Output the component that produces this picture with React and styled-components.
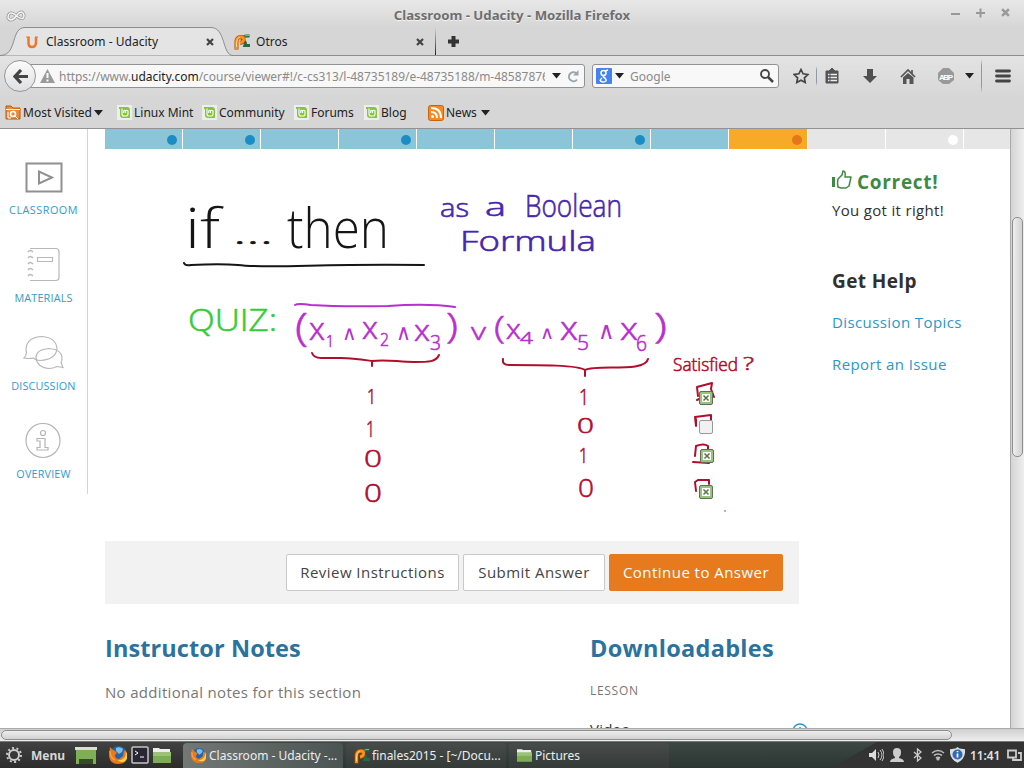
import React from "react";
import styled, { createGlobalStyle } from "styled-components";

const Global = createGlobalStyle`
  * { box-sizing: border-box; }
  body { margin: 0; width: 1024px; height: 768px; overflow: hidden; background: #fff; }
  svg { display: block; flex: none; }
  button { font: inherit; margin: 0; }
  h2, p { margin: 0; }
`;
const Screen = styled.div`
  width: 1024px; height: 768px; display: flex; flex-direction: column; overflow: hidden;
  font: 12px "Noto Sans", sans-serif; color: #222; background: #d6d6d6;
`;
const TitleBar = styled.header`
  height: 27px; flex: none; display: grid; grid-template-columns: 80px 1fr 80px; align-items: center;
  padding: 2px 14px 0 5px; background: linear-gradient(#e8e8e8, #d6d6d6);
`;
const Title = styled.div`
  text-align: center; font-weight: 700; font-size: 13.2px; color: #6e6e6e; white-space: nowrap;
  text-shadow: 0 1px #f4f4f4; padding-left: 9px;
`;
const WindowButtons = styled.div`display: flex; justify-content: flex-end; gap: 15px; margin-top: -3px;`;
const Tabs = styled.div`height: 29px; flex: none; display: flex; background: #d6d6d6; border-bottom: 1px solid #8d8d8d;`;
const ActiveTab = styled.div`
  width: 233px; height: 29px; display: grid; align-items: center;
  > * { grid-area: 1 / 1; }
`;
const TabBody = styled.div`
  display: flex; align-items: center; height: 29px; padding-left: ${(p) => p.$left}px; width: ${(p) => p.$width}px;
  line-height: 16px; letter-spacing: 0.02px;
  svg:last-child { margin-left: auto; }
`;
const TabLabel = styled.span`margin-left: ${(p) => p.$gap || 6}px; white-space: nowrap;`;
const TabRule = styled.i`width: 1px; height: 28px; margin: 0 11px 0 11px; background: linear-gradient(transparent, #222);`;
const NavBar = styled.div`
  height: 40px; flex: none; display: flex; align-items: center; padding: 0 12px 0 4px; background: linear-gradient(#e3e3e3, #d7d7d7);
`;
const BackButton = styled.div`
  width: 32px; height: 32px; border-radius: 50%; border: 1px solid #8f989f; background: linear-gradient(#fbfbfb, #dfdfdf);
  display: grid; place-items: center; flex: none; z-index: 1;
`;
const Field = styled.div`
  height: 24px; width: ${(p) => p.$width}px; margin-left: ${(p) => p.$left}px; flex: none; display: flex; align-items: center;
  border: 1px solid #929292; border-radius: ${(p) => (p.$joined ? "0 3px 3px 0" : "3px")}; background: #f8f8f8; color: #8a8a8a;
  padding: 0 4px 0 ${(p) => p.$pad}px;
`;
const Address = styled.div`
  width: 489px; overflow: hidden; white-space: nowrap; margin: 0 7px 0 4px; letter-spacing: -0.025px;
  b { font-weight: 400; color: #1c1c1c; }
`;
const SearchText = styled.span`flex: 1; margin-left: 6px;`;
const Tools = styled.div`flex: 1; height: 40px; display: flex; align-items: center; padding-left: 14px;`;
const ToolRule = styled.i`flex: none; width: 1px; height: ${(p) => p.$h}px; background: linear-gradient(transparent, #8e9aa8 20%, #8e9aa8 80%, transparent); margin: 0 ${(p) => p.$r}px 0 ${(p) => p.$l}px;`;
const Spacer = styled.i`width: ${(p) => p.$w}px; flex: none;`;
const Bookmarks = styled.div`
  height: 33px; flex: none; display: flex; align-items: center; padding: 1px 5px 0; background: #d6d6d6; border-bottom: 1px solid #929292;
`;
const Bookmark = styled.div`display: flex; align-items: center; gap: 2px; width: ${(p) => p.$w}px; white-space: nowrap; flex: none; line-height: 16px;`;
const Viewport = styled.div`height: 599px; flex: none; display: flex; background: #fff; overflow: hidden;`;
const Sidebar = styled.nav`width: 88px; height: 365px; flex: none; border-right: 1px solid #d4d4d4; padding-top: 30px;`;
const SideItem = styled.div`
  height: 88px; display: flex; flex-direction: column; align-items: center; color: #2f9bd0;
  font: 10.8px/16px "Open Sans", sans-serif; letter-spacing: ${(p) => p.$ls}px;
  svg { margin-bottom: 6px; }
`;
const Page = styled.main`width: 905px; margin-left: 17px; flex: none; font-family: "Open Sans", sans-serif; overflow: hidden;`;
const Progress = styled.div`height: 20px; display: flex; gap: 1px;`;
const Segment = styled.div`
  width: ${(p) => (p.$state === "now" ? 78 : 77)}px; height: 20px; flex: none; display: flex; align-items: center; justify-content: flex-end; padding-right: 5px;
  padding-top: 1px; background: ${(p) => ({ done: "#8cc5d8", now: "#f7a928", next: "#e6e6e6" })[p.$state]};
`;
const Dot = styled.i`width: 10px; height: 10px; border-radius: 50%; background: ${(p) => ({ done: "#1c8cc5", now: "#e5761b", next: "#fff" })[p.$state]};`;
const Columns = styled.div`display: flex; height: 455px;`;
const Lesson = styled.section`width: 694px; flex: none;`;
const Board = styled.div`position: relative; height: 392px;`;
const Ink = styled.text`
  font-family: ${(p) => (p.$symbol ? '"DejaVu Sans"' : '"Open Sans"')}, sans-serif; font-weight: 300; font-size: ${(p) => p.$size}px;
  fill: ${(p) => p.$color}; stroke: ${(p) => p.$color}; stroke-width: ${(p) => (p.$symbol || p.$size > 50 ? 0 : 0.6)};
`;
const Check = styled.div`
  position: absolute; left: ${(p) => p.$x}px; top: ${(p) => p.$y}px; width: 14px; height: 14px; border-radius: 2px;
  border: 1px solid ${(p) => (p.$on ? "#5e6d5c" : "#999")}; background: ${(p) => (p.$on ? "#9cc37c" : "#f1f1f1")};
  display: grid; place-items: center;
`;
const Actions = styled.div`height: 63px; display: flex; align-items: center; justify-content: flex-end; gap: 4px; padding: 0 16px 0 0; background: #f2f2f2;`;
const Action = styled.button`
  width: ${(p) => p.$w}px; height: 37px; padding: 0 0 2px; border-radius: 2px; font-size: 15px; white-space: nowrap; letter-spacing: 0.46px;
  border: 1px solid ${(p) => (p.$primary ? "#e67a1c" : "#c9c9c9")};
  background: ${(p) => (p.$primary ? "#e67a1c" : "#fff")}; color: ${(p) => (p.$primary ? "#fff" : "#444")};
`;
const Aside = styled.aside`padding: 20px 0 0 33px; font-size: 15px; color: #303030;`;
const Verdict = styled.h2`display: flex; gap: 5px; font-size: 19px; line-height: 26px; font-weight: 700; color: #3f8a43; height: 27px; letter-spacing: 0.7px;`;
const AsideText = styled.p`line-height: 28px; height: 28px; letter-spacing: 0.32px;`;
const AsideTitle = styled.h2`margin-top: 42px; height: 28px; line-height: 30px; font-size: 19px; font-weight: 700; letter-spacing: 0.4px;`;
const AsideLink = styled.p`margin-top: 14px; line-height: 28px; color: #2a97cd; letter-spacing: 0.4px;`;
const Notes = styled.div`display: grid; grid-template-columns: 485px 1fr; padding-top: 27px;`;
const NotesTitle = styled.h2`font-size: 23.5px; line-height: 34px; font-weight: 700; color: #2a739e; white-space: nowrap; letter-spacing: ${(p) => p.$ls || 0}px;`;
const NoteText = styled.p`margin-top: 15px; font-size: 15px; line-height: 24px; color: #777; letter-spacing: 0.32px;`;
const Label = styled.p`margin-top: 16px; font-size: 12px; line-height: 20px; color: #777; letter-spacing: 0.7px;`;
const FileRow = styled.div`
  display: flex; justify-content: space-between; width: 218px; margin-top: 17px; font-size: 15px; line-height: 22px; color: #333; letter-spacing: 0.2px;
  svg { margin-top: 5px; }
`;
const VScroll = styled.div`width: 14px; flex: none; border-left: 1px solid #aaa; background: linear-gradient(90deg, #d4d4d4, #eee); padding: 88px 1px 0 1px;`;
const Thumb = styled.div`
  border: 1px solid #8e8e8e; border-radius: 5px; height: ${(p) => p.$h}px; width: ${(p) => p.$w}px;
  background: linear-gradient(${(p) => (p.$h > 20 ? "90deg, " : "")}#eee, #d2d2d2);
`;
const HScroll = styled.div`
  height: 14px; flex: none; padding: 1px 1px; background: linear-gradient(#d0d0d0, #eee); border-top: 1px solid #aaa; border-bottom: 1px solid #777;
`;
const Taskbar = styled.footer`
  height: 26px; flex: none; display: flex; align-items: center; color: #eee;
  background: linear-gradient(150deg, transparent 0 82%, #333 82%), linear-gradient(#3d4744, #2b3532);
`;
const Launcher = styled.div`width: 183px; height: 26px; display: flex; align-items: center; padding-left: 5px; background: linear-gradient(#414141, #2c2c2c); flex: none;`;
const MenuLabel = styled.b`width: 37px; margin: 0 7px 0 8px; color: #d8d8d8; font-size: 12px;`;
const Task = styled.div`
  width: 160px; height: 25px; margin: 1px 3px 0 0; flex: none; display: flex; align-items: center; gap: ${(p) => p.$gap ?? 3}px; padding-left: 8px; border-radius: 4px 4px 0 0;
  background: ${(p) => (p.$on ? "linear-gradient(90deg, #737876, #4a5452)" : "linear-gradient(#474c4a, #343a38)")}; white-space: nowrap;
`;
const Tray = styled.div`margin-left: auto; display: flex; align-items: center; height: 26px; padding-right: 2px;`;
const Clock = styled.span`font-weight: 600; color: #e4e4e4; width: 31px; font-size: 11.8px; white-space: nowrap;`;

const Cross = ({ s = 8, c = "#444", w = 2.2 }) => (
  <svg width={s} height={s} viewBox="0 0 8 8"><path d="M1 1l6 6M7 1L1 7" stroke={c} strokeWidth={w} /></svg>
);
const Caret = () => <svg width="9" height="6"><path d="M0 0h9L4.500 5.500z" fill="#222" /></svg>;
const Mint = () => (
  <svg width="15" height="15"><rect width="15" height="15" fill="#eee" /><path d="M2 2h8q3 0 3 3v8H6q-3 0-3-3V4H2z" fill="#86c440" />
    <path d="M5 3.500v5.500q0 2 2 2h2.500q1.500 0 1.500-2V6q-1.500-1.500-2.500 0V8M8.500 6Q7 4.500 6.700 6.500V8" fill="none" stroke="#fff" strokeWidth="1.100" /></svg>
);
const Folder = ({ w = 18, h = 15 }) => (
  <svg width={w} height={h} viewBox="0 0 18 15"><path d="M0 0h6l1 1h10v4H0z" fill="#eee" /><path d="M0 4h18v11H0z" fill="#7eac57" /><path d="M0 4h18v4H0z" fill="#9bc276" /></svg>
);
const Fox = ({ s = 18 }) => (
  <svg width={s} height={s} viewBox="0 0 18 18"><circle cx="9.500" cy="8" r="8" fill="#2664a8" /><path d="M7 2q4-2 7 1l-1 3-3 2-3-3z" fill="#78c0e8" />
    <path d="M1 1l3 3 2 1 2 2-2 2q0 4 4 4l4-3 1-6q3 3 3 7 0 7-9 7Q1 18 0 10z" fill="#e9791b" /><path d="M16 4q2 5-1 8-3 3-7 2 6 4 9 0 3-5-1-10z" fill="#ffd34e" /><path d="M1 5q0 7 5 9" fill="none" stroke="#ffa338" strokeWidth="1.500" /></svg>
);
const PyIcon = () => (
  <svg width="17" height="16" viewBox="0 0 17 16">
    <path d="M15.500 2H13Q9 2 8 4.500q0 2 2 3t1 4h5" fill="none" stroke="#1f6e42" strokeWidth="3.200" /><path d="M15 1.500h-2q-3 0-4 2" fill="none" stroke="#7ac190" strokeWidth="1" />
    <path d="M2.500 15.500V9Q2 3 7 3q3 0 2.500 3Q9 8.500 6 9" fill="none" stroke="#b8440c" strokeWidth="4" />
    <path d="M2.500 15V9Q2 3 7 3q3 0 2.500 3Q9 8.500 6 9" fill="none" stroke="#f7941d" strokeWidth="2.800" />
    <path d="M2.500 13V9Q2.500 4 6 3" fill="none" stroke="#ffd866" strokeWidth="1" />
  </svg>
);

const sideItems = [
  ["CLASSROOM", 0.5, <svg width="38" height="37"><path d="M1.500 4.500h35v28h-35z" fill="none" stroke="#909090" strokeWidth="2" /><path d="M14 12.500v12l13-6z" fill="none" stroke="#909090" strokeWidth="2" /></svg>],
  ["MATERIALS", 0.18, <svg width="38" height="37" fill="none" stroke="#b9b9b9" strokeWidth="1.200"><path d="M5 1.500h26q3 0 3 3v26q0 3-3 3H5M12.500 10.500h15v4h-15z" /><path d="M3 5q2-3 5 0M3 11q2-3 5 0M3 17q2-3 5 0M3 23q2-3 5 0M3 29q2-3 5 0" strokeWidth="1.500" /></svg>],
  ["DISCUSSION", 0.15, <svg width="42" height="37" fill="none" stroke="#b9b9b9" strokeWidth="1.200"><path d="M3 14Q4 2 19 1.500q14 1 15 12-1 11-17 12-4 0-7-2.500-3 1-9 0 2-2 2.500-5z" /><path d="M13 22.500q0-8 13-9 13 1 13 10 0 3-1 4l2 5-6-1q-4 2-8 2-12-1-13-11z" /></svg>],
  ["OVERVIEW", 0.18, <svg width="38" height="37" fill="none" stroke="#b5b5b5" strokeWidth="1.200"><circle cx="18" cy="17.500" r="17" /><circle cx="18" cy="10" r="2.500" /><path d="M12 15.500h8v9h3v2.500H12v-2.500h3V18h-3z" /></svg>],
];
const segments = [["done", 1], ["done", 1], ["done"], ["done", 1], ["done"], ["done"], ["done", 1], ["done"], ["now", 1], ["next"], ["next", 1], ["next"]];
const ink = { black: "#151515", blue: "#4527ae", green: "#35cd35", pink: "#b92ed0", red: "#b20d2d" };
/* text, x, baseline, size, drawn width, ink */
const writing = [
  ["if", 185, 248, 56, 35, "black"], ["...", 233, 244, 30, 40, "black"], ["then", 287, 248, 56, 102, "black"],
  ["as", 440, 217, 25, 29, "blue"], ["a", 485, 216, 25, 21, "blue"], ["Boolean", 525, 217, 31, 97, "blue"], ["Formula", 460, 251, 27, 136, "blue"],
  ["QUIZ:", 188, 331, 31, 89, "green"],
  ["(", 295, 341, 38, 13, "pink"], ["x", 309, 340, 31, 16, "pink"], ["1", 326, 347, 17, 8, "pink"], ["∧", 342, 340, 20, 15, "pink"],
  ["x", 362, 339, 31, 16, "pink"], ["2", 380, 346, 19, 9, "pink"], ["∧", 396, 340, 22, 15, "pink"], ["x", 414, 341, 29, 16, "pink"], ["3", 430, 350, 21, 11, "pink"], [")", 446, 338, 34, 12, "pink"],
  ["v", 471, 340, 24, 15, "pink"], ["(", 494, 338, 32, 11, "pink"], ["x", 506, 339, 28, 15, "pink"], ["4", 520, 344, 17, 13, "pink"], ["∧", 540, 339, 18, 14, "pink"],
  ["x", 560, 340, 33, 18, "pink"], ["5", 577, 350, 20, 12, "pink"], ["∧", 598, 339, 24, 17, "pink"], ["x", 620, 340, 32, 18, "pink"], ["6", 636, 351, 22, 11, "pink"], [")", 654, 338, 34, 13, "pink"],
  ["Satisfied", 673, 371, 19, 65, "red"], ["?", 743, 370, 19, 11, "red"],
  ["1", 367, 404, 20, 9, "red"], ["1", 366, 437, 22, 9, "red"], ["0", 364, 467, 24, 18, "red"], ["0", 364, 502, 25, 18, "red"],
  ["1", 579, 405, 22, 10, "red"], ["0", 577, 433, 20, 17, "red"], ["1", 579, 463, 20, 9, "red"], ["0", 578, 497, 26, 16, "red"],
];

const Whiteboard = () => (
  <svg width="694" height="392" viewBox="105 149 694 392" fill="none" strokeWidth="2" strokeLinecap="round" strokeLinejoin="round">
    {writing.map(([t, x, y, s, w, c], i) => (
      <Ink key={i} x={x} y={y} textLength={w} lengthAdjust="spacingAndGlyphs" $symbol={t === "∧"} $size={s} $color={ink[c]}>{t}</Ink>
    ))}
    <path d="M184 263q1 3 7 2c20-1 35-1 47 0 30 4 90-2 186 0" stroke={ink.black} />
    <path d="M295 305q3-2 16 0 30 2 77 1 40-3 67 1" stroke={ink.pink} />
    <g stroke={ink.red}>
      <path d="M312 353q2 5 9 5l20 0c12 0 24 2 31 3v5m0-5c15-2 26 1 42 1 15 0 22 0 25-7" />
      <path d="M503 359q-1 6 6 6c31 0 69 0 76 5v6m0-6c12-6 60 3 63-11" />
      <path d="M697 400l2-1M698 396l-1-9 15-4-1 6 3 8M696 419v7l-1-9 16-2v5M695 456l1-10q8-3 12 0v4M693 462l16 1M696 491l-1-9 3-2h11v4" />
      <path d="M725 511h.1" strokeWidth="1.300" />
    </g>
  </svg>
);

export default function App() {
  return (
    <Screen>
      <Global />
      <TitleBar>
        <svg width="22" height="14" viewBox="0 -1 22 14" fill="none"><path d="M10 9q-5 4-7 0 0-7 6-4l4 3q6 4 6-2-2-6-7 0-4 6-8 4" stroke="#999" strokeWidth="3" /><path d="M10 9q-5 4-7 0 0-7 6-4l4 3q6 4 6-2-2-6-7 0-4 6-8 4" stroke="#f4f4f4" strokeWidth="1.500" /></svg>
        <Title>Classroom - Udacity - Mozilla Firefox</Title>
        <WindowButtons>
          <svg width="10" height="10"><path d="M0 6h9" stroke="#999" strokeWidth="2" /></svg>
          <svg width="10" height="10"><path d="M0 5h9M4.500 .5v9" stroke="#999" strokeWidth="2" /></svg>
          <Cross s={9} c="#999" />
        </WindowButtons>
      </TitleBar>
      <Tabs>
        <ActiveTab>
          <svg width="233" height="29"><path d="M0 28.500C18 28.500 10 .5 25 .5h186c15 0 11 28 22 28" fill="#e4e4e4" stroke="#8d8d8d" /></svg>
          <TabBody $left={25} $width={214}>
            <svg width="14" height="14" fill="none" stroke="#ed762c"><path d="M1 2h4M10 2h3" /><path d="M3.500 2v6q0 4 3.500 4t4-4V2" strokeWidth="2.500" /></svg>
            <TabLabel $gap={7}>Classroom - Udacity</TabLabel><Cross />
          </TabBody>
        </ActiveTab>
        <TabBody $left={1} $width={191}><PyIcon /><TabLabel $gap={5}>Otros</TabLabel><Cross /></TabBody>
        <TabRule />
        <TabBody $left={0} $width={12}><svg width="11" height="11"><path d="M5.500 0v11M0 5.500h11" stroke="#333" strokeWidth="4" /></svg></TabBody>
      </Tabs>
      <NavBar>
        <BackButton><svg width="15" height="15"><path d="M8 1L2 7.500l6 6.500M3 7.500h12" fill="none" stroke="#444" strokeWidth="3.200" /></svg></BackButton>
        <Field $width={555} $left={-6} $pad={9} $joined>
          <svg width="15" height="14"><path d="M7.500 0L15 14H0z" fill="#9a9a9a" /><path d="M7.500 4v5m0 1.500v2" stroke="#fff" strokeWidth="2" /></svg>
          <Address>https://www.<b>udacity.com</b>/course/viewer#!/c-cs313/l-48735189/e-48735188/m-48587876</Address>
          <Caret /><Spacer $w={6} />
          <svg width="13" height="13" fill="none"><path d="M10 9.500A4.500 4.500 0 1 1 9 3" stroke="#98a4ae" strokeWidth="2" /><path d="M11.500 0v5.500H6z" fill="#98a4ae" /></svg>
        </Field>
        <Field $width={187} $left={7} $pad={3}>
          <svg width="16" height="16"><rect width="16" height="16" rx="1" fill="#4385ee" /><g fill="none" stroke="#fff" strokeWidth="1.500"><circle cx="7.500" cy="5" r="2.500" /><path d="M9 3l3-1M8 7.500q-2 1 1 2.500 3 4-2 4-5-1-1-4" /></g></svg>
          <Spacer $w={3} /><Caret /><SearchText>Google</SearchText>
          <svg width="16" height="16" fill="none" stroke="#444"><circle cx="7" cy="6" r="4" strokeWidth="1.800" /><path d="M10 9l5 5" strokeWidth="2.500" /></svg>
        </Field>
        <Tools>
          <svg width="17" height="16"><path d="M8 1.500l2.100 4.300 4.700.7-3.400 3.300.8 4.700L8 12.300l-4.200 2.200.8-4.700L1.200 6.500l4.700-.7z" fill="none" stroke="#444" strokeWidth="1.700" /></svg>
          <ToolRule $h={20} $l={6} $r={7} />
          <svg width="16" height="16"><path d="M2 3h3l3-3 3 3h3v12H2z" fill="#555" stroke="#555" strokeWidth="1" /><path d="M4 6.500h1.500m1 0H13M4 9.500h1.500m1 0H13M4 12.500h1.500m1 0H13" stroke="#eee" strokeWidth="1.500" /></svg>
          <Spacer $w={23} /><svg width="15" height="15"><path d="M4 0h6v7h4L7 14 0 7h4z" fill="#505050" /></svg>
          <Spacer $w={22} /><svg width="17" height="15"><path d="M1 8l7-7 7 7M12 1v4" fill="none" stroke="#555" strokeWidth="1.700" /><path d="M3 8.500L8 4l5.500 4.500V15h-4v-5h-3v5H3z" fill="#555" /></svg>
          <Spacer $w={21} /><svg width="17" height="17"><path d="M5 0h6l5 5v7l-5 4H5l-5-4V5z" fill="#999" /><text x="8" y="11.500" textAnchor="middle" textLength="14" fontFamily="Liberation Sans" fontWeight="700" fontSize="8" fill="#fff">ABP</text></svg>
          <Spacer $w={10} /><Caret /><ToolRule $h={34} $l={7} $r={13} />
          <svg width="16" height="14"><path d="M1.500 2h13m-13 5h13m-13 5h13" stroke="#444" strokeWidth="2.800" strokeLinecap="round" /></svg>
        </Tools>
      </NavBar>
      <Bookmarks>
        <Bookmark $w={112}><svg width="16" height="15"><path d="M1 4V1h5l2 2h7v11H1z" fill="#e78d3c" stroke="#b45b15" /><path d="M1 4.500h14" stroke="#fff0db" /><circle cx="8" cy="9" r="2.500" fill="none" stroke="#fff" strokeWidth="1.500" /><path d="M10 11l3 3M3 7v6h3" stroke="#fff" fill="none" /></svg><span>Most Visited</span><Caret /></Bookmark>
        <Bookmark $w={85}><Mint />Linux Mint</Bookmark><Bookmark $w={92}><Mint />Community</Bookmark>
        <Bookmark $w={70}><Mint />Forums</Bookmark><Bookmark $w={64}><Mint />Blog</Bookmark>
        <Bookmark $w={70}><svg width="16" height="16"><rect x=".5" y=".5" width="15" height="15" rx="2" fill="#f58b20" stroke="#cb610e" /><path d="M3 3q10 0 10 10M3 7q6 0 6 6" fill="none" stroke="#fff" strokeWidth="2" /><circle cx="4.500" cy="11.500" r="1.500" fill="#fff" /></svg><span>News</span><Spacer $w={0} /><Caret /></Bookmark>
      </Bookmarks>
      <Viewport>
        <Sidebar>{sideItems.map(([name, ls, icon]) => <SideItem key={name} $ls={ls}>{icon}{name}</SideItem>)}</Sidebar>
        <Page>
          <Progress>{segments.map(([state, dot], i) => <Segment key={i} $state={state}>{dot && <Dot $state={state} />}</Segment>)}</Progress>
          <Columns>
            <Lesson>
              <Board><Whiteboard />
                {[[594, 242, 1], [594, 271, 0], [595, 300, 1], [594, 336, 1]].map(([x, y, on]) => <Check key={y} $x={x} $y={y} $on={on}>{on ? <svg width="8" height="8"><rect width="8" height="8" fill="#fff" /><path d="M1.500 1.500l5 5m0-5l-5 5" stroke="#56714d" strokeWidth="1.500" /></svg> : null}</Check>)}
              </Board>
              <Actions><Action $w={173}>Review Instructions</Action><Action $w={142}>Submit Answer</Action><Action $w={174} $primary>Continue to Answer</Action></Actions>
            </Lesson>
            <Aside>
              <Verdict><svg width="20" height="20" viewBox="0 -1 20 20"><path d="M0 7h3v10H0z" fill="#3f8a43" /><path d="M6 17q-1-4 0-8l4-4 1-4q3 0 2 6h6l-2 9-3 2H9z" fill="none" stroke="#3f8a43" strokeWidth="1.500" strokeLinejoin="round" /></svg>Correct!</Verdict>
              <AsideText>You got it right!</AsideText><AsideTitle>Get Help</AsideTitle><AsideLink>Discussion Topics</AsideLink><AsideLink>Report an Issue</AsideLink>
            </Aside>
          </Columns>
          <Notes>
            <div><NotesTitle $ls={0.1}>Instructor Notes</NotesTitle><NoteText>No additional notes for this section</NoteText></div>
            <div><NotesTitle $ls={0.3}>Downloadables</NotesTitle><Label>LESSON</Label><FileRow>Video<svg width="16" height="16" fill="none" stroke="#2a97cd" strokeWidth="1.500"><circle cx="8" cy="8" r="7" /><path d="M8 4v7M5 8l3 3 3-3" /></svg></FileRow></div>
          </Notes>
        </Page>
        <VScroll><Thumb $h={240} $w={11} /></VScroll>
      </Viewport>
      <HScroll><Thumb $h={10} $w={951} /></HScroll>
      <Taskbar>
        <Launcher>
          <svg width="18" height="18" fill="none" stroke="#ccc"><circle cx="9" cy="9" r="5" strokeWidth="2" /><circle cx="9" cy="9" r="7" strokeWidth="2" strokeDasharray="2 2.400" /></svg>
          <MenuLabel>Menu</MenuLabel>
          <svg width="22" height="17"><path d="M0 0h22v3H0z" fill="#ddd" /><path d="M1 3h20v14H1z" fill="#7eae55" /><path d="M4 12h14v5H4z" fill="#354c28" /></svg>
          <Spacer $w={12} /><Fox /><Spacer $w={4} />
          <svg width="18" height="18"><rect x="1" y="1" width="16" height="16" rx="1" fill="#292733" stroke="#c4c4c4" strokeWidth="1.500" /><path d="M4 5l3 2-3 2m5 2h4" stroke="#fff" fill="none" /></svg>
          <Spacer $w={4} /><Folder />
        </Launcher>
        <Task $on><Fox s={15} />Classroom - Udacity -...</Task><Task $gap={1}><PyIcon />finales2015 - [~/Docu...</Task><Task><Folder w={15} h={13} />Pictures</Task>
        <Tray>
          <svg width="15" height="14"><path d="M0 5h3l4-4v12L3 9H0z" fill="#ddd" /><path d="M9 4q2 3 0 6M11 2q4 5 0 10M13 1q4 6 0 12" fill="none" stroke="#ccc" /></svg>
          <Spacer $w={6} /><svg width="14" height="14"><path d="M3 4q0-4 4-4t4 4q0 4-2 5v1q5 1 5 4H0q0-3 5-4V9Q3 8 3 4z" fill="#ccc" /></svg>
          <Spacer $w={9} /><svg width="9" height="14"><path d="M1 4l7 6-3.500 3V1L8 4l-7 6" fill="none" stroke="#ccc" strokeWidth="1.300" /></svg>
          <Spacer $w={9} /><svg width="14" height="12" fill="none" stroke="#bbb" strokeWidth="1.600"><path d="M1 4q6-5 12 0M3 6.500q4-3 8 0M5 9q2-1.500 4 0" /><circle cx="7" cy="10" r=".8" /></svg>
          <Spacer $w={5} /><svg width="15" height="16"><path d="M7.500 0l2 1.500 5.500.8q1 9-7.500 13.500Q-1 11.500 0 2.300l5.500-.8z" fill="#ddd" /><circle cx="7.500" cy="7.500" r="5" fill="#3069b5" /><path d="M7.500 4v1.200m0 1.300v4" stroke="#fff" strokeWidth="1.700" /></svg>
          <Spacer $w={5} /><Clock>11:41</Clock><Spacer $w={6} />
          <svg width="15" height="13"><path d="M1 1.500h8v7H1zM11 4h3v7H6V9" fill="none" stroke="#ccc" strokeWidth="1.800" /></svg>
        </Tray>
      </Taskbar>
    </Screen>
  );
}
